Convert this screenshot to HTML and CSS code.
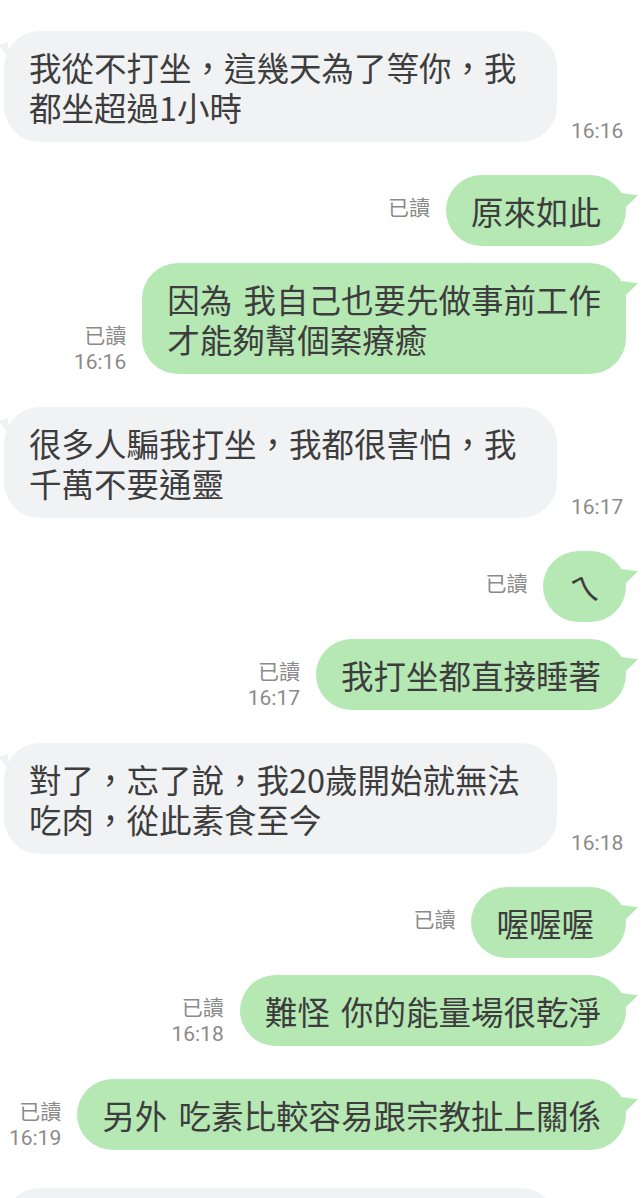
FILE: index.html
```html
<!DOCTYPE html>
<html lang="zh-Hant">
<head>
    <meta charset="UTF-8">
    <meta name="viewport" content="width=device-width, initial-scale=1.0">
    <title>Chat</title>
    <link rel="stylesheet" href="styles.css">
</head>
<body>

<div class="chat">

    <!-- 16:16 -->
    <div class="row in">
        <div class="bubble">我從不打坐，這幾天為了等你，我都坐超過1小時</div>
        <div class="meta"><span class="time">16:16</span></div>
    </div>

    <div class="row out">
        <div class="meta"><span>已讀</span><span class="time"></span></div>
        <div class="bubble">原來如此</div>
    </div>

    <div class="row out cont">
        <div class="meta"><span>已讀</span><span class="time">16:16</span></div>
        <div class="bubble">因為 我自己也要先做事前工作<br>才能夠幫個案療癒</div>
    </div>

    <!-- 16:17 -->
    <div class="row in">
        <div class="bubble">很多人騙我打坐，我都很害怕，我千萬不要通靈</div>
        <div class="meta"><span class="time">16:17</span></div>
    </div>

    <div class="row out">
        <div class="meta"><span>已讀</span><span class="time"></span></div>
        <div class="bubble">ㄟ</div>
    </div>

    <div class="row out cont">
        <div class="meta"><span>已讀</span><span class="time">16:17</span></div>
        <div class="bubble">我打坐都直接睡著</div>
    </div>

    <!-- 16:18 -->
    <div class="row in">
        <div class="bubble">對了，忘了說，我20歲開始就無法吃肉，從此素食至今</div>
        <div class="meta"><span class="time">16:18</span></div>
    </div>

    <div class="row out">
        <div class="meta"><span>已讀</span><span class="time"></span></div>
        <div class="bubble wide">喔喔喔</div>
    </div>

    <div class="row out cont">
        <div class="meta"><span>已讀</span><span class="time">16:18</span></div>
        <div class="bubble">難怪 你的能量場很乾淨</div>
    </div>

    <!-- 16:19 -->
    <div class="row out">
        <div class="meta"><span>已讀</span><span class="time">16:19</span></div>
        <div class="bubble">另外 吃素比較容易跟宗教扯上關係</div>
    </div>

    <div class="row in next">
        <div class="bubble empty"></div>
    </div>

</div>

</body>
</html>
```

FILE: styles.css
```css
/* Reset */
body {
    margin: 0;
    padding: 0;
    background-color: #ffffff;
    font-family: "Noto Sans CJK TC", "Noto Sans", sans-serif;
    color: #3d3d3d;
    overflow: hidden;
}

/* Chat list */
.chat {
    display: flex;
    flex-direction: column;
    padding-top: 31px;
}

.row {
    display: flex;
    align-items: flex-end;
    margin-top: 33px;
}

.row:first-child {
    margin-top: 0;
}

.row.cont {
    margin-top: 17px;
}

.row.next {
    margin-top: 38px;
}

.row.in {
    justify-content: flex-start;
    padding-left: 4px;
}

.row.out {
    justify-content: flex-end;
    padding-right: 16px;
}

/* Bubbles */
.bubble {
    position: relative;
    box-sizing: border-box;
    max-width: 553px;
    padding: 15.5px 25px;
    border-radius: 36px;
    font-size: 32.5px;
    line-height: 40px;
    word-spacing: 4px;
}

.row.in .bubble {
    background-color: #f1f2f4;
}

.row.out .bubble {
    background-color: #b6e8b4;
}

.bubble.wide {
    padding-right: 32px;
}

.bubble.empty {
    width: 553px;
    min-height: 71px;
}

/* Tails */
.row.out .bubble::after {
    content: "";
    position: absolute;
    right: -12px;
    top: 18px;
    width: 16px;
    height: 18px;
    background-color: #b6e8b4;
    clip-path: polygon(0 0, 100% 12%, 0 100%);
}

.row.in .bubble::before {
    content: "";
    position: absolute;
    left: -6px;
    top: 11px;
    width: 10px;
    height: 14px;
    background-color: #f1f2f4;
    clip-path: polygon(100% 0, 0 20%, 100% 100%);
}

/* Read mark and time */
.meta {
    display: flex;
    flex-direction: column;
    align-items: flex-end;
    font-family: Roboto, "Noto Sans CJK TC", sans-serif;
    font-size: 21px;
    line-height: 28px;
    color: #8a8a8a;
}

.row.out .meta {
    margin-right: 16px;
    margin-bottom: -2px;
}

.row.out .meta span {
    min-height: 28px;
}

.row.out .meta span:first-child {
    font-family: "Noto Sans CJK TC", sans-serif;
}

.row.in .meta {
    margin-left: 14px;
    margin-bottom: -3px;
}
```
